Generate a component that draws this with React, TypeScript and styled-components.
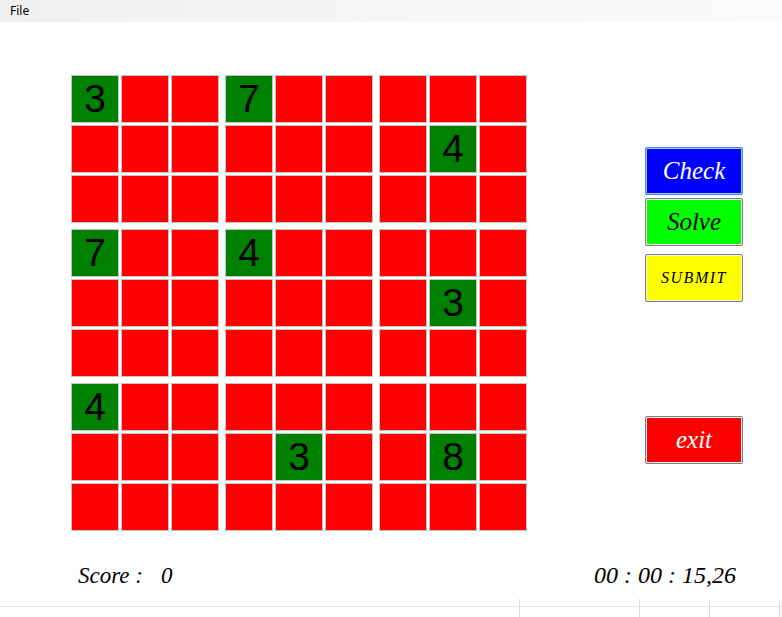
import React from "react";
import styled, { createGlobalStyle } from "styled-components";

const Global = createGlobalStyle`
  html, body { margin: 0; padding: 0; background: #ffffff; }
  body { font-family: "Liberation Serif", serif; }
  #root { width: 782px; height: 617px; }
`;

const Window = styled.div`
  width: 782px;
  height: 617px;
  display: flex;
  flex-direction: column;
  background: #ffffff;
  overflow: hidden;
`;

const MenuBar = styled.div`
  height: 22px;
  flex: 0 0 22px;
  display: flex;
  align-items: center;
  background: linear-gradient(to right, #f0f0f0 0%, #f5f5f5 40%, #fbfbfb 100%);
`;

const MenuItem = styled.span`
  font-family: "Noto Sans", "Open Sans", sans-serif;
  font-size: 12px;
  color: #000;
  padding: 0 0 1px 10px;
`;

const Main = styled.div`
  flex: 1;
  display: flex;
  flex-direction: column;
  padding-top: 52px;
`;

const TopRow = styled.div`
  display: flex;
  align-items: flex-start;
  padding-left: 70px;
`;

const Board = styled.div`
  display: grid;
  grid-template-columns: repeat(3, 150px);
  grid-template-rows: repeat(3, 150px);
  gap: 4px;
  width: 458px;
`;

const Block = styled.div`
  display: grid;
  grid-template-columns: repeat(3, 50px);
  grid-template-rows: repeat(3, 50px);
`;

const Cell = styled.div<{ $given: boolean }>`
  margin: 1px;
  border: 1px solid #c4c4c4;
  background: ${(p) => (p.$given ? "#008000" : "#ff0000")};
  display: flex;
  align-items: center;
  justify-content: center;
  font-family: "Liberation Sans", Arial, sans-serif;
  font-size: 39px;
  line-height: 1;
  color: #000;
  padding-bottom: 2px;
  box-sizing: border-box;
`;

const ButtonColumn = styled.div`
  display: flex;
  flex-direction: column;
  margin-left: 117px;
  margin-top: 73px;
`;

const ActionButton = styled.button<{ $bg: string; $fg: string; $focused?: boolean; $offset: number; $size: number; $spacing?: number }>`
  width: 98px;
  height: 48px;
  margin-top: ${(p) => p.$offset}px;
  box-sizing: border-box;
  border: 1px solid ${(p) => (p.$focused ? "#3d8ed3" : "#7e7e7e")};
  border-radius: 2px;
  box-shadow: inset 0 0 0 1px ${(p) => (p.$focused ? "#9fc8ee" : "#f2f2f2")};
  background: ${(p) => p.$bg};
  color: ${(p) => p.$fg};
  font-family: "Liberation Serif", "DejaVu Serif", serif;
  font-style: italic;
  font-size: ${(p) => p.$size}px;
  letter-spacing: ${(p) => p.$spacing ?? 0}px;
  padding: 0;
  display: flex;
  align-items: center;
  justify-content: center;
  cursor: pointer;
`;

const BottomRow = styled.div`
  display: flex;
  justify-content: space-between;
  align-items: baseline;
  margin-top: 30px;
  padding: 0 46px 0 78px;
  font-family: "Liberation Serif", "Times New Roman", serif;
  font-style: italic;
  color: #000;
`;

const ScoreGroup = styled.div`
  display: flex;
  align-items: baseline;
`;

const Label = styled.span`
  font-size: 23px;
  line-height: 26px;
`;

const ScoreValue = styled.span`
  font-size: 23px;
  line-height: 26px;
  margin-left: 18px;
`;

const Timer = styled.span`
  font-size: 24px;
  line-height: 26px;
`;

const StatusBar = styled.div`
  flex: 0 0 19px;
  height: 19px;
  display: flex;
  background: linear-gradient(
    to bottom,
    transparent 0,
    transparent 8px,
    #e6e6e6 8px,
    #e6e6e6 9px,
    transparent 9px
  );
`;

const StatusPanel = styled.div<{ $w: number }>`
  width: ${(p) => p.$w}px;
  flex: 0 0 ${(p) => p.$w}px;
  box-sizing: border-box;
  border-right: 1px solid #dcdcdc;
  margin-top: 1px;
`;

const givens: Record<string, number> = {
  "0-0": 3,
  "0-3": 7,
  "1-7": 4,
  "3-0": 7,
  "3-3": 4,
  "4-7": 3,
  "6-0": 4,
  "7-4": 3,
  "7-7": 8,
};

export default function App() {
  const blocks = [];
  for (let br = 0; br < 3; br++) {
    for (let bc = 0; bc < 3; bc++) {
      const cells = [];
      for (let r = 0; r < 3; r++) {
        for (let c = 0; c < 3; c++) {
          const row = br * 3 + r;
          const col = bc * 3 + c;
          const v = givens[`${row}-${col}`];
          cells.push(
            <Cell key={`${row}-${col}`} $given={v !== undefined}>
              {v ?? ""}
            </Cell>
          );
        }
      }
      blocks.push(<Block key={`${br}-${bc}`}>{cells}</Block>);
    }
  }

  return (
    <>
      <Global />
      <Window>
        <MenuBar>
          <MenuItem>File</MenuItem>
        </MenuBar>
        <Main>
          <TopRow>
            <Board>{blocks}</Board>
            <ButtonColumn>
              <ActionButton $bg="#0000ff" $fg="#ffffff" $focused $offset={0} $size={25}>
                Check
              </ActionButton>
              <ActionButton $bg="#00ff00" $fg="#000000" $offset={3} $size={25}>
                Solve
              </ActionButton>
              <ActionButton $bg="#ffff00" $fg="#000000" $offset={8} $size={16} $spacing={1.5}>
                SUBMIT
              </ActionButton>
              <ActionButton $bg="#ff0000" $fg="#ffffff" $offset={114} $size={25}>
                exit
              </ActionButton>
            </ButtonColumn>
          </TopRow>
          <BottomRow>
            <ScoreGroup>
              <Label>Score :</Label>
              <ScoreValue>0</ScoreValue>
            </ScoreGroup>
            <Timer>00 : 00 : 15,26</Timer>
          </BottomRow>
        </Main>
        <StatusBar>
          <StatusPanel $w={520} />
          <StatusPanel $w={120} />
          <StatusPanel $w={70} />
          <StatusPanel $w={70} />
        </StatusBar>
      </Window>
    </>
  );
}
